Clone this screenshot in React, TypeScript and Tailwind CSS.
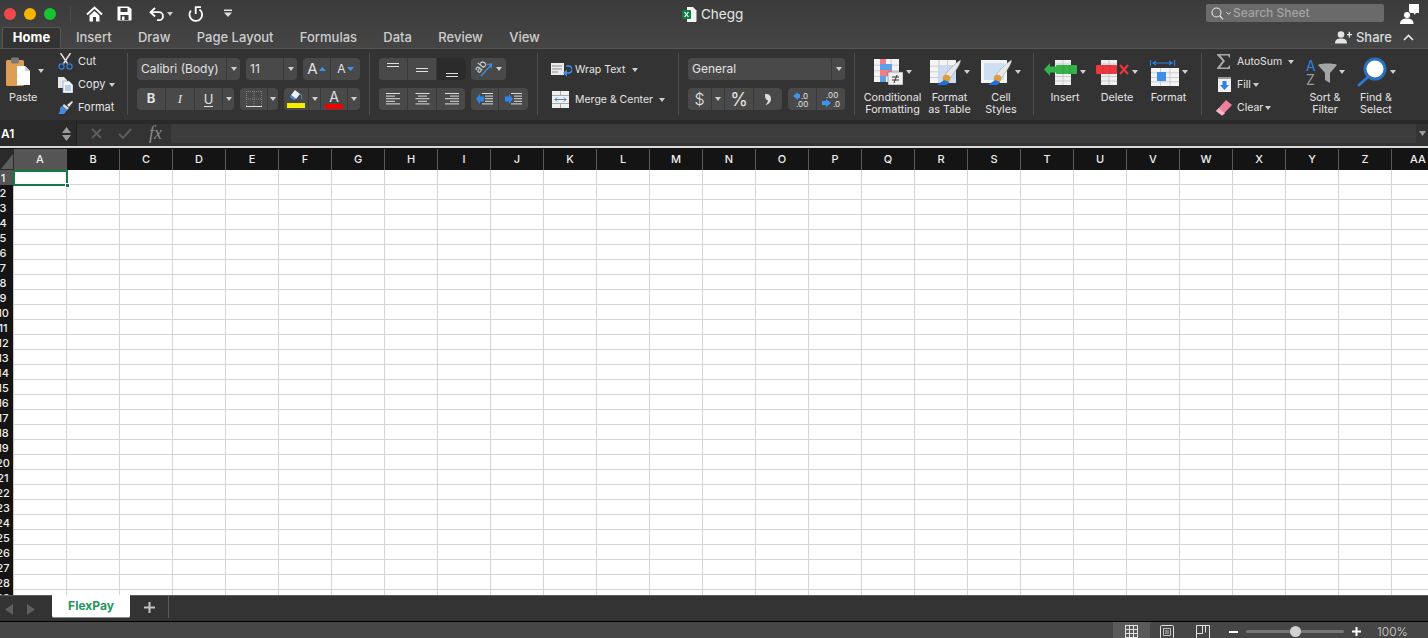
import type { ReactNode } from "react";

const COLUMNS = "A B C D E F G H I J K L M N O P Q R S T U V W X Y Z AA AB".split(" ");
const ROWS = Array.from({ length: 29 }, (_, i) => i + 1);
const TABS = ["Insert", "Draw", "Page Layout", "Formulas", "Data", "Review", "View"];

function Caret({ className = "" }: { className?: string }) {
  return (
    <svg width="6" height="4" viewBox="0 0 6 4" className={`shrink-0 ${className}`}>
      <path d="M0 0h6L3 4z" fill="#cfcfcf" />
    </svg>
  );
}

function Box({ className = "", children }: { className?: string; children: ReactNode }) {
  return (
    <div className={`flex h-[22px] items-stretch overflow-hidden rounded-[4px] bg-[#494949] text-[#e2e2e2] ${className}`}>
      {children}
    </div>
  );
}

function Cell({ className = "", children, last }: { className?: string; children?: ReactNode; last?: boolean }) {
  return (
    <div className={`flex items-center justify-center ${last ? "" : "border-r border-[#3a3a3a]"} ${className}`}>
      {children}
    </div>
  );
}

function Line({ w, y, c = "#e0e0e0" }: { w: number; y: number; c?: string }) {
  return <rect x={(14 - w) / 2} y={y} width={w} height="1" fill={c} />;
}

function AlignV({ rows }: { rows: number[] }) {
  return (
    <svg width="14" height="18" viewBox="0 0 14 18">
      {rows.map((y) => (
        <Line key={y} w={12} y={y} />
      ))}
    </svg>
  );
}

function AlignH({ mode }: { mode: "l" | "c" | "r" }) {
  const widths = [14, 9, 14, 9, 14];
  return (
    <svg width="15" height="12" viewBox="0 0 15 12">
      {widths.map((w, i) => (
        <rect key={i} x={mode === "l" ? 0 : mode === "c" ? (15 - w) / 2 : 15 - w} y={i * 2.6} width={w} height="1" fill="#dedede" />
      ))}
    </svg>
  );
}

function Indent({ flip }: { flip?: boolean }) {
  return (
    <svg width="18" height="12" viewBox="0 0 18 12">
      <path d={flip ? "M0 3.5h4V1l4 5-4 5V8.500H0z" : "M8 3.500H4V1L0 6l4 5V8.500h4z"} fill="#2e86e8" />
      {[0, 2.600, 5.200, 7.800, 10.400].map((y) => (
        <rect key={y} x={y > 2 && y < 9 ? 9 : 6} y={y} width={y > 2 && y < 9 ? 8 : 11} height="1" fill="#dedede" />
      ))}
    </svg>
  );
}

function TinyTable({ x, y, w, h, fill = "#f4f4f4", line = "#bdbdbd" }: { x: number; y: number; w: number; h: number; fill?: string; line?: string }) {
  return (
    <g>
      <rect x={x} y={y} width={w} height={h} fill={fill} />
      {[1, 2].map((i) => (
        <rect key={i} x={x + (w * i) / 3} y={y} width="0.7" height={h} fill={line} />
      ))}
      {[1, 2, 3].map((i) => (
        <rect key={i} x={x} y={y + (h * i) / 4} width={w} height="0.7" fill={line} />
      ))}
    </g>
  );
}

function Brush() {
  return (
    <g>
      <path d="M30.500 1C31 4 26 12 20 19L15 16C20 9 27 3 30.500 1z" fill="#e8e8e8" stroke="#8f8f8f" strokeWidth="0.500" />
      <circle cx="16.500" cy="19.500" r="3.800" fill="#e09b3a" />
      <path d="M14 21c-2 2-5 3-7 5h9c2-1 3-2 3-3z" fill="#1f6fdc" />
    </g>
  );
}

function LargeButton({ icon, caret = true, lines, className }: { icon: ReactNode; caret?: boolean; lines: string[]; className: string }) {
  return (
    <div className={`-mt-[3px] flex flex-col items-center ${className}`}>
      <div className="flex h-[34px] shrink-0 items-center justify-center gap-[3px]">
        {icon}
        {caret && <Caret />}
      </div>
      <div className="mt-[3px] shrink-0 text-center text-[10.800px] leading-[12px] text-[#e4e4e4]">
        {lines.map((l) => (
          <div key={l} className="whitespace-nowrap">{l}</div>
        ))}
      </div>
    </div>
  );
}

function Group({ className = "", children }: { className?: string; children: ReactNode }) {
  return <div className={`relative flex h-[62px] shrink-0 border-r border-[#4e4e4e] pt-[5px] ${className}`}>{children}</div>;
}

function SmallAction({ icon, label, caretClass = "ml-[2px]" }: { icon: ReactNode; label: string; caretClass?: string }) {
  return (
    <div className="flex h-[23px] items-center text-[10.500px] text-[#e4e4e4]">
      <div className="flex w-[20px] justify-center">{icon}</div>
      <span className="ml-[3px] whitespace-nowrap">{label}</span>
      <Caret className={caretClass} />
    </div>
  );
}

function TitleBar() {
  return (
    <div className="relative flex h-[27px] items-center">
      <div className="ml-[4px] flex gap-[8px]">
        <span className="size-[12px] rounded-full bg-[#f1484b]" />
        <span className="size-[12px] rounded-full bg-[#f5b400]" />
        <span className="size-[12px] rounded-full bg-[#17c431]" />
      </div>
      <div className="ml-[14px] h-[16px] w-px bg-[#4a4a4a]" />
      <svg width="17" height="16" viewBox="0 0 17 16" className="ml-[15px]">
        <path d="M1 8.500 8.500 1.500 16 8.500" fill="none" stroke="#fff" strokeWidth="2" />
        <path d="M3.500 9.500 8.500 5l5 4.500v6H10V11H7v4.500H3.500z" fill="#fff" />
      </svg>
      <svg width="15" height="15" viewBox="0 0 15 15" className="ml-[14px]">
        <path d="M1 .5h10.500L14.500 3v11.500H.5V.5z" fill="#fff" />
        <rect x="3.500" y="2" width="7" height="4" fill="#3d3d3d" />
        <rect x="3.500" y="9" width="8" height="5" fill="#3d3d3d" />
        <rect x="5" y="10.500" width="2.500" height="3.500" fill="#fff" />
      </svg>
      <svg width="16" height="14" viewBox="0 0 16 14" fill="none" stroke="#fff" strokeWidth="1.800" className="ml-[17px]">
        <path d="M6 1 1.500 5.200 6 9.500M2 5.200h8a4 4 0 0 1 0 8H8" />
      </svg>
      <Caret className="ml-[2px]" />
      <svg width="16" height="16" viewBox="0 0 16 16" fill="none" stroke="#fff" strokeWidth="1.800" className="ml-[14px]">
        <path d="M4 4.500A6.300 6.300 0 1 0 12.500 3.500" />
        <path d="M8.700 8V1.200H14" />
      </svg>
      <svg width="8" height="9" viewBox="0 0 8 9" className="ml-[21px]">
        <rect width="8" height="1.500" y="0.500" fill="#e0e0e0" />
        <path d="M0 3.500h8L4 8z" fill="#e0e0e0" />
      </svg>

      {/* document title sits over the centre of the bar */}
      <div className="absolute left-[682px] top-[4px] flex items-center gap-[4px]">
        <svg width="15" height="15" viewBox="0 0 15 15">
          <path d="M5 0h6l3.500 3.500V14a1 1 0 0 1-1 1H5z" fill="#f4f4f4" />
          <rect y="3" width="9" height="9" rx="1" fill="#107c41" />
          <path d="m2 5 1.300 0 1.200 1.800L5.700 5H7L5.200 7.500 7 10H5.700L4.500 8.200 3.300 10H2l1.800-2.500z" fill="#fff" />
        </svg>
        <span className="text-[13.500px] text-[#e8e8e8]">Chegg</span>
      </div>

      <div className="absolute left-[1206px] top-[4px] flex h-[18px] w-[178px] items-center rounded-[2px] bg-[#6a6a6a] pl-[5px]">
        <svg width="16" height="13" viewBox="0 0 16 13" fill="none" stroke="#e6e6e6">
          <circle cx="5.500" cy="5.500" r="4.500" strokeWidth="1.100" />
          <path d="m9 9 3 3.300" strokeWidth="1.200" />
        </svg>
        <svg width="5" height="3" viewBox="0 0 5 3" fill="none" stroke="#e6e6e6" className="ml-[-1px]">
          <path d="m.5.300 2 2 2-2" />
        </svg>
        <span className="ml-[2px] text-[12px] font-medium text-[#a3a3a3]">Search Sheet</span>
      </div>

      <svg width="19" height="21" viewBox="0 0 19 21" className="absolute left-[1400px] top-[4px]">
        <path d="M9 0h10v9h-3l-2 2V9H9z" fill="#fff" />
        <circle cx="7" cy="11" r="3.600" fill="#fff" stroke="#3f3f3f" />
        <path d="M0 20c0-4 3-5.500 7-5.500s6.500 1.500 6.500 5.500z" fill="#fff" />
      </svg>
    </div>
  );
}

function TabRow() {
  return (
    <div className="flex h-[21px] items-end">
      <div className="ml-[2px] flex h-[21px] w-[59px] items-center justify-center rounded-t-[3px] border-x border-t border-[#565656] bg-[#333333] text-[13px] font-bold text-white">
        Home
      </div>
      <div className="ml-[15px] flex h-[21px] items-center gap-[26.300px] text-[13px] font-medium text-[#cdcdcd]">
        {TABS.map((t) => (
          <span key={t} className="whitespace-nowrap">{t}</span>
        ))}
      </div>
      <div className="ml-auto flex h-[21px] items-center">
        <svg width="17" height="13" viewBox="0 0 17 13">
          <circle cx="6" cy="3.500" r="3.300" fill="#e4e4e4" />
          <path d="M0 12.500c0-4 2.500-5 6-5s6 1 6 5z" fill="#e4e4e4" />
          <path d="M12 3h1.700V.8h1.300V3h2v1.300h-2v2.200h-1.300V4.300H12z" fill="#e4e4e4" />
        </svg>
        <span className="ml-[4px] text-[13px] font-medium text-[#dcdcdc]">Share</span>
        <svg width="11" height="7" viewBox="0 0 11 7" fill="none" stroke="#e4e4e4" strokeWidth="1.700" className="ml-[11px] mr-[14px]">
          <path d="m1 6 4.500-4.500L10 6" />
        </svg>
      </div>
    </div>
  );
}

function Clipboard() {
  return (
    <Group className="w-[128px]">
      <div className="-mt-[3px] flex w-[48px] flex-col pl-[6px]">
        <div className="flex h-[34px] shrink-0 items-center">
          <svg width="24" height="30" viewBox="0 0 24 30">
            <rect x="0" y="3" width="18" height="26" rx="1.500" fill="#dd9d54" />
            <rect x="5" y="0.500" width="8" height="6" rx="1.500" fill="#7a7a7a" />
            <path d="M11 9h8l5 5v14H11z" fill="#fff" />
            <path d="M19 9v5h5z" fill="#cfcfcf" />
          </svg>
          <Caret className="ml-[8px] mb-[3px]" />
        </div>
        <span className="ml-[3px] mt-[3px] text-[10.800px] leading-[12px] text-[#e4e4e4]">Paste</span>
      </div>
      <div className="-mt-[8px] ml-[10px] flex flex-col text-[11px] text-[#e4e4e4]">
        <div className="flex h-[23px] shrink-0 items-center">
          <svg width="15" height="17" viewBox="0 0 15 17" fill="none" className="mr-[5px]">
            <path d="M2.500 0 9.500 10.500M12.500 0 5.500 10.500" stroke="#e6e6e6" strokeWidth="1.400" />
            <circle cx="3.500" cy="13.500" r="2.600" stroke="#2e7fe0" strokeWidth="1.200" />
            <circle cx="11.500" cy="13.500" r="2.600" stroke="#2e7fe0" strokeWidth="1.200" />
          </svg>
          Cut
        </div>
        <div className="flex h-[23px] shrink-0 items-center">
          <svg width="15" height="16" viewBox="0 0 15 16" className="mr-[5px]">
            <path d="M0 0h6l3 3v8H0z" fill="#e8e8e8" />
            <path d="M5 4h6l4 4v8H5z" fill="#f4f4f4" stroke="#6f9ccc" strokeWidth="0.600" />
            <path d="M7 9h6M7 11h6M7 13h6" stroke="#5b94d6" strokeWidth="0.800" />
          </svg>
          Copy
          <Caret className="ml-[4px]" />
        </div>
        <div className="flex h-[23px] shrink-0 items-center">
          <svg width="15" height="13" viewBox="0 0 15 13" className="mr-[5px]">
            <path d="m15 1-1-1-5 4 2 2z" fill="#e8e8e8" />
            <path d="M6 3 11 7 9 9 4.500 5z" fill="#d9d9d9" />
            <path d="M4 5 9 9.500 6 13H0c2-1 2-4 2-6z" fill="#3f8ce6" />
          </svg>
          Format
        </div>
      </div>
    </Group>
  );
}

function FontGroup() {
  return (
    <Group className="w-[242px] flex-col gap-[8px] pl-[9px]">
      <div className="flex gap-[6px]">
        <Box className="w-[103px] text-[12px]">
          <Cell className="w-[90px] justify-start! pl-[4px]">Calibri (Body)</Cell>
          <Cell last className="flex-1"><Caret /></Cell>
        </Box>
        <Box className="w-[51px] text-[12px]">
          <Cell className="w-[38px] justify-start! pl-[4px]">11</Cell>
          <Cell last className="flex-1"><Caret /></Cell>
        </Box>
        <Box className="w-[57px]">
          <Cell className="w-[28px] gap-[1px] text-[15px]">
            A<svg width="7" height="4" viewBox="0 0 7 4"><path d="M0 4h7L3.500 0z" fill="#3d93ee" /></svg>
          </Cell>
          <Cell last className="flex-1 gap-[1px] text-[12px]">
            A<svg width="7" height="4" viewBox="0 0 7 4"><path d="M0 0h7L3.500 4z" fill="#3d93ee" /></svg>
          </Cell>
        </Box>
      </div>
      <div className="flex gap-[6px]">
        <Box className="w-[97px] text-[13px]">
          <Cell className="w-[29px] font-bold">B</Cell>
          <Cell className="w-[29px] italic font-['Liberation_Serif',serif]">I</Cell>
          <Cell className="w-[28px]"><span className="border-b border-[#e2e2e2] leading-[14px]">U</span></Cell>
          <Cell last className="flex-1"><Caret /></Cell>
        </Box>
        <Box className="w-[38px]">
          <Cell className="w-[28px]">
            <svg width="16" height="16" viewBox="0 0 16 16" fill="none">
              <path d="M.5 0v15M8 0v15M15.500 0v15M0 .5h16M0 8h16" stroke="#8a8a8a" strokeWidth="0.800" strokeDasharray="1 1" />
              <path d="M0 15.500h16" stroke="#dcdcdc" />
            </svg>
          </Cell>
          <Cell last className="flex-1"><Caret /></Cell>
        </Box>
        <Box className="w-[76px]">
          <Cell className="w-[25px]">
            <svg width="18" height="18" viewBox="0 0 18 18">
              <path d="m8 0 5 4-4 5-5-4z" fill="#f0f0f0" />
              <path d="m4 5 5 4-2 1-4-3z" fill="#3d93ee" />
              <path d="M13 4c2 1 2 3 1.500 5" stroke="#3d93ee" fill="none" />
              <rect y="13" width="18" height="5" fill="#f5ee00" />
            </svg>
          </Cell>
          <Cell className="w-[12px]"><Caret /></Cell>
          <Cell className="w-[27px]">
            <div className="flex flex-col items-center leading-[14px] text-[14px]">
              A
              <div className="h-[5px] w-[18px] bg-[#f00000]" />
            </div>
          </Cell>
          <Cell last className="flex-1"><Caret /></Cell>
        </Box>
      </div>
    </Group>
  );
}

function AlignGroup() {
  return (
    <Group className="w-[168px] flex-col gap-[8px] pl-[9px]">
      <div className="flex gap-[5px]">
        <Box className="w-[87px]">
          <Cell className="w-[29px]"><AlignV rows={[3, 6]} /></Cell>
          <Cell className="w-[29px]"><AlignV rows={[8, 11]} /></Cell>
          <Cell last className="flex-1 bg-[#2b2b2b]"><AlignV rows={[13, 16]} /></Cell>
        </Box>
        <Box className="w-[35px]">
          <Cell last className="flex-1 gap-[3px]">
            <svg width="18" height="18" viewBox="0 0 18 18" overflow="visible">
              <text x="0" y="11" fontSize="11" fill="#dedede" transform="rotate(-50 5 8)">ab</text>
              <path d="M6 16 16 5M12 4.500 16.500 4 16 8.500" stroke="#3d93ee" strokeWidth="1.200" fill="none" />
            </svg>
            <Caret />
          </Cell>
        </Box>
      </div>
      <div className="flex gap-[6px]">
        <Box className="w-[86px]">
          <Cell className="w-[29px]"><AlignH mode="l" /></Cell>
          <Cell className="w-[29px]"><AlignH mode="c" /></Cell>
          <Cell last className="flex-1"><AlignH mode="r" /></Cell>
        </Box>
        <Box className="w-[57px]">
          <Cell className="w-[28px]"><Indent /></Cell>
          <Cell last className="flex-1"><Indent flip /></Cell>
        </Box>
      </div>
    </Group>
  );
}

function WrapGroup() {
  return (
    <Group className="w-[141px] flex-col gap-[7px] pl-[13px] text-[10.500px] text-[#e4e4e4]">
      <div className="mt-[1px] flex h-[22px] shrink-0 items-center">
        <svg width="21" height="14" viewBox="0 0 21 14" className="mr-[3px]">
          <rect width="13" height="12" fill="#ececec" />
          <path d="M1 3h10M1 6h10M1 9h6" stroke="#8a8a8a" />
          <path d="M15 3h2.500a3.500 3.500 0 0 1 0 7H16" fill="none" stroke="#3d93ee" strokeWidth="1.500" />
          <path d="m16 6.500-4 3.500 4 3.500z" fill="#3d93ee" />
        </svg>
        Wrap Text
        <Caret className="ml-[7px]" />
      </div>
      <div className="flex h-[23px] shrink-0 items-center">
        <svg width="21" height="17" viewBox="0 0 21 17" className="mr-[3px]">
          <rect x="1" width="17" height="17" fill="#f0f0f0" />
          <path d="M1 4.500h17M1 12.500h17M9.500 0v4M9.500 13v4" stroke="#8a8a8a" strokeWidth="0.700" />
          <path d="M4 8.500h11M6 6.500l-2 2 2 2M13 6.500l2 2-2 2" fill="none" stroke="#3d7fd0" />
        </svg>
        Merge &amp; Center
        <Caret className="ml-[6px]" />
      </div>
    </Group>
  );
}

function NumberGroup() {
  return (
    <Group className="w-[176px] flex-col gap-[8px] pl-[9px]">
      <Box className="w-[157px] text-[12px]">
        <Cell className="w-[144px] justify-start! pl-[4px]">General</Cell>
        <Cell last className="flex-1"><Caret /></Cell>
      </Box>
      <div className="flex gap-[6px]">
        <Box className="w-[94px]">
          <Cell className="w-[24px] text-[16px] font-light">$</Cell>
          <Cell className="w-[13px]"><Caret /></Cell>
          <Cell className="w-[29px] text-[18px]">%</Cell>
          <Cell last className="flex-1">
            <svg width="6" height="11" viewBox="0 0 6 11">
              <path d="M0 .3c3-.8 6 1 6 4.700 0 3-2.500 5.500-5.500 6C2.500 9 3 7.500 2.700 6 1 6.300 0 4.500 0 .3z" fill="#dedede" />
            </svg>
          </Cell>
        </Box>
        <Box className="w-[57px]">
          <Cell className="w-[29px]">
            <svg width="20" height="17" viewBox="0 0 20 17">
              <path d="M6 1 1 5l5 4V7h2V3H6z" fill="#3d93ee" />
              <text x="9" y="8" fontSize="8" fill="#e4e4e4">.0</text>
              <text x="4" y="16" fontSize="8" fill="#e4e4e4">.00</text>
            </svg>
          </Cell>
          <Cell last className="flex-1">
            <svg width="20" height="17" viewBox="0 0 20 17">
              <text x="5" y="7" fontSize="8" fill="#e4e4e4">.00</text>
              <text x="12" y="16" fontSize="8" fill="#e4e4e4">.0</text>
              <path d="M5 8l5 4-5 4v-2H1v-4h4z" fill="#3d93ee" />
            </svg>
          </Cell>
        </Box>
      </div>
    </Group>
  );
}

function StylesGroup() {
  return (
    <Group className="w-[179px] pl-[9px]">
      <LargeButton
        className="w-[57px]"
        lines={["Conditional", "Formatting"]}
        icon={
          <svg width="29" height="26" viewBox="0 0 29 26">
            <TinyTable x={0} y={0} w={25} h={23} />
            <rect x="6" y="0" width="6" height="5" fill="#ee7f86" />
            <rect x="6" y="5" width="12" height="6" fill="#5f9fe8" />
            <rect x="6" y="11" width="12" height="6" fill="#ee7f86" />
            <rect x="6" y="17" width="6" height="6" fill="#5f9fe8" />
            <rect x="14" y="13" width="15" height="13" fill="#efefef" stroke="#555" strokeWidth="0.500" />
            <path d="M18 18h7M18 21h7M23 16l-3 8" stroke="#333" fill="none" />
          </svg>
        }
      />
      <LargeButton
        className="w-[57px]"
        lines={["Format", "as Table"]}
        icon={
          <svg width="31" height="27" viewBox="0 0 31 27">
            <TinyTable x={0} y={1} w={26} h={23} />
            <rect x="8" y="6" width="18" height="18" fill="#c3d6ef" opacity="0.800" />
            <Brush />
          </svg>
        }
      />
      <LargeButton
        className="w-[46px]"
        lines={["Cell", "Styles"]}
        icon={
          <svg width="31" height="27" viewBox="0 0 31 27">
            <rect x="0" y="1" width="26" height="23" fill="#f4f4f4" />
            <rect x="3" y="4" width="20" height="17" fill="#cfdff3" />
            <Brush />
          </svg>
        }
      />
    </Group>
  );
}

function CellsGroup() {
  return (
    <Group className="w-[168px] pl-[5px]">
      <LargeButton
        className="w-[52px]"
        lines={["Insert"]}
        icon={
          <svg width="33" height="25" viewBox="0 0 33 25">
            <rect x="11" y="0" width="16" height="25" fill="#f0f0f0" />
            <path d="M19 0v25M11 16.500h16M11 21h16M11 4h16" stroke="#bbb" strokeWidth="0.700" />
            <rect x="12" y="5" width="21" height="9" rx="1" fill="#35b34a" />
            <path d="M19 5v9M26 5v9" stroke="#2a8f3b" strokeWidth="0.600" />
            <path d="M12 6.500H6V3L0 9.500 6 16v-3.500h6z" fill="#35b34a" />
          </svg>
        }
      />
      <LargeButton
        className="w-[52px]"
        lines={["Delete"]}
        icon={
          <svg width="33" height="25" viewBox="0 0 33 25">
            <rect x="5" y="0" width="16" height="25" fill="#f0f0f0" />
            <path d="M13 0v25M5 16.500h16M5 21h16M5 4h16" stroke="#bbb" strokeWidth="0.700" />
            <rect x="0" y="5" width="21" height="9" rx="1" fill="#ea3a3f" />
            <path d="M7 5v9M14 5v9" stroke="#bd2b2f" strokeWidth="0.600" />
            <path d="m24 5 8 9M32 5l-8 9" stroke="#e8373c" strokeWidth="2.200" />
          </svg>
        }
      />
      <LargeButton
        className="w-[51px]"
        lines={["Format"]}
        icon={
          <svg width="29" height="27" viewBox="0 0 29 27">
            <path d="M.5 1v6M24.500 1v6M3 4h19M6 2 3 4l3 2M19 2l3 2-3 2" stroke="#2f83e0" strokeWidth="1.200" fill="none" />
            <TinyTable x={1} y={9} w={28} h={18} />
            <rect x="7" y="13" width="9" height="9" fill="#3d8ee8" />
          </svg>
        }
      />
    </Group>
  );
}

function EditGroup() {
  return (
    <div className="flex h-[62px] shrink-0 pl-[12px] pt-[5px]">
      <div className="-mt-[8px] w-[86px]">
        <SmallAction
          label="AutoSum"
          caretClass="ml-[6px]"
          icon={
            <svg width="14" height="15" viewBox="0 0 14 15">
              <path d="M0 0h13v3.500h-1L11 1.500H3.500L8 7l-5 6.500h8l1-2h1V15H0v-1l5.500-7L0 1z" fill="#aaa" />
            </svg>
          }
        />
        <SmallAction
          label="Fill"
          icon={
            <svg width="13" height="15" viewBox="0 0 13 15">
              <rect width="13" height="15" fill="#f0f0f0" />
              <rect width="13" height="2" fill="#999" />
              <path d="M4.500 4h4v4H11l-4.500 5L2 8h2.500z" fill="#2e80e4" />
            </svg>
          }
        />
        <SmallAction
          label="Clear"
          icon={
            <svg width="16" height="16" viewBox="0 0 16 16">
              <path d="M10 0 16 5 6 15.500 0 11z" fill="#ef7f9c" />
              <path d="M3 8 9 13.500 6 15.500 0 11z" fill="#f7b6c6" />
            </svg>
          }
        />
      </div>
      <LargeButton
        className="w-[50px]"
        lines={["Sort &", "Filter"]}
        icon={
          <svg width="33" height="27" viewBox="0 0 33 27" overflow="visible" className="-mr-[3px]">
            <text x="0" y="12" fontSize="14" fill="#2f83e0">A</text>
            <text x="0" y="26" fontSize="14" fill="#9a9a9a">Z</text>
            <path d="M12 6c2-2 17-2 19 0l-7 8v10l-5-3v-7z" fill="#a5a5a5" />
          </svg>
        }
      />
      <LargeButton
        className="w-[52px]"
        lines={["Find &", "Select"]}
        icon={
          <svg width="30" height="30" viewBox="0 0 30 30">
            <circle cx="18" cy="12" r="10" fill="#fff" stroke="#2a6fc0" strokeWidth="3" />
            <path d="m11 20-9 8" stroke="#2f78cf" strokeWidth="3" strokeLinecap="round" />
          </svg>
        }
      />
    </div>
  );
}

function Ribbon() {
  return (
    <div className="flex h-[72px] border-t border-[#555555] bg-[#333333] pt-[4px]">
      <Clipboard />
      <FontGroup />
      <AlignGroup />
      <WrapGroup />
      <NumberGroup />
      <StylesGroup />
      <CellsGroup />
      <EditGroup />
    </div>
  );
}

function FormulaBar() {
  return (
    <div className="flex h-[26px] bg-[#2a2a2a]">
      <div className="flex w-[77px] items-center justify-between border-r border-[#222] pb-[1px] pl-[1px] pr-[5px]">
        <span className="mt-[3px] text-[12px] font-semibold text-white">A1</span>
        <div className="mt-[3px] flex flex-col gap-[2px]">
          <svg width="9" height="6" viewBox="0 0 9 6"><path d="M0 6h9L4.500 0z" fill="#9a9a9a" /></svg>
          <svg width="9" height="6" viewBox="0 0 9 6"><path d="M0 0h9L4.500 6z" fill="#9a9a9a" /></svg>
        </div>
      </div>
      <div className="flex flex-1 items-end bg-[#333333]">
        <div className="flex h-[26px] w-full items-center bg-[#2a2a2a]">
          <div className="mt-[4px] flex h-[22px] w-full items-start bg-[#333333]">
            <div className="flex h-[19px] w-[94px] items-center">
              <svg width="11" height="11" viewBox="0 0 11 11" className="ml-[14px]" stroke="#5c5c5c" strokeWidth="2">
                <path d="m1 1 9 9M10 1l-9 9" />
              </svg>
              <svg width="14" height="11" viewBox="0 0 14 11" className="ml-[16px]" fill="none" stroke="#5c5c5c" strokeWidth="2">
                <path d="m1 6 4 4 8-9" />
              </svg>
              <span className="ml-[17px] font-['Liberation_Serif',serif] text-[18px] italic text-[#8a8a8a]">fx</span>
            </div>
            <div className="h-[19px] flex-1 rounded-l-[2px] bg-[#3c3c3c]" />
            <div className="flex h-[19px] w-[12px] items-center justify-center">
              <svg width="7" height="5" viewBox="0 0 7 5"><path d="M0 0h7L3.500 5z" fill="#9a9a9a" /></svg>
            </div>
          </div>
        </div>
      </div>
    </div>
  );
}

function Sheet() {
  return (
    <div className="relative flex-1 overflow-hidden bg-white">
      <div className="flex h-[21px] w-max bg-[#141414]">
        <div className="relative w-[14px] bg-[#2a2a2a]">
          <svg width="13" height="21" viewBox="0 0 13 21" className="block">
            <path d="M13 5v15H1z" fill="#5d5d5d" />
          </svg>
        </div>
        {COLUMNS.map((c, i) => (
          <div
            key={c}
            className={`flex w-[53px] items-center justify-center border-r border-[#5a5a5a] text-[11px] font-medium text-[#eeeeee] ${i === 0 ? "bg-[#555555]" : ""}`}
          >
            {c}
          </div>
        ))}
      </div>
      {ROWS.map((r) => (
        <div key={r} className="flex h-[15px] w-max">
          <div className={`flex h-[15px] w-[14px] overflow-hidden border-r border-[#c8c8c8] text-[11px] font-medium leading-[16px] text-[#eeeeee] ${r === 1 ? "bg-[#555555]" : "bg-[#141414]"}`}>
            <div className="flex w-[6px] justify-center">
              <span className="whitespace-nowrap">{r}</span>
            </div>
          </div>
          {COLUMNS.map((c) => (
            <div key={c} className="h-[15px] w-[53px] border-r border-b border-[#d4d4d4]" />
          ))}
        </div>
      ))}
      {/* active cell selection */}
      <div className="absolute left-[13px] top-[21px] h-[16px] w-[55px] border-2 border-[#107c41]" />
      <div className="absolute left-[65px] top-[34px] size-[5px] border border-white bg-[#107c41]" />
    </div>
  );
}

function SheetTabs() {
  return (
    <div className="flex h-[27px] border-t border-[#5c5c5c] border-b border-b-black bg-[#333333]">
      <div className="flex w-[52px] items-start gap-[14px] pl-[5px] pt-[8px]">
        <svg width="8" height="11" viewBox="0 0 8 11"><path d="M8 0v11L0 5.500z" fill="#5f5f5f" /></svg>
        <svg width="8" height="11" viewBox="0 0 8 11"><path d="M0 0v11l8-5.500z" fill="#5f5f5f" /></svg>
      </div>
      <div className="-mt-px flex h-[23px] w-[78px] items-center justify-center rounded-b-[2px] border-b border-[#8a8a8a] bg-white text-[12px] font-bold text-[#1e9a5c]">
        FlexPay
      </div>
      <div className="flex h-[22px] w-[39px] items-center justify-center border-r border-[#5c5c5c]">
        <svg width="11" height="11" viewBox="0 0 11 11"><path d="M4.500 0h2v4.500H11v2H6.500V11h-2V6.500H0v-2h4.500z" fill="#c4c4c4" /></svg>
      </div>
    </div>
  );
}

function StatusBar() {
  return (
    <div className="flex h-[16px] items-center bg-[#464646] text-[#d6d6d6]">
      <div className="ml-[1113px] flex h-[16px] w-[37px] items-center justify-center bg-[#5a5a5a]">
        <svg width="13" height="13" viewBox="0 0 13 13" fill="none" stroke="#e2e2e2" className="mt-[3px]">
          <path d="M.5 0v13M4.500 0v13M8.500 0v13M12.500 0v13M0 .5h13M0 4.500h13M0 8.500h13M0 12.500h13" />
        </svg>
      </div>
      <svg width="14" height="14" viewBox="0 0 14 14" fill="none" stroke="#e2e2e2" className="ml-[10px] mt-[3px]">
        <rect x="0.500" y="0.500" width="13" height="13" rx="1" />
        <path d="M3.500 3.500h7v7h-7zM5 6h4M5 8h4" strokeWidth="0.800" />
      </svg>
      <svg width="14" height="14" viewBox="0 0 14 14" fill="none" stroke="#e2e2e2" className="ml-[22px] mt-[3px]">
        <path d="M.5 14V.5h13V14M.5 8.500h6V.5M9.500.5v7" />
      </svg>
      <div className="ml-[19px] mt-[3px] h-[2px] w-[9px] bg-white" />
      <div className="relative ml-[8px] mt-[3px] h-[3px] w-[98px] rounded-full bg-[#767676]">
        <div className="absolute left-[44px] top-[-4px] size-[11px] rounded-full bg-[#d2d2d2]" />
      </div>
      <svg width="9" height="9" viewBox="0 0 9 9" className="ml-[8px] mt-[3px]">
        <path d="M3.500 0h2v3.500H9v2H5.500V9h-2V5.500H0v-2h3.500z" fill="#fff" />
      </svg>
      <span className="ml-[16px] mt-[3px] text-[12px] font-light">100%</span>
    </div>
  );
}

export default function App() {
  return (
    <div className="flex h-[638px] w-[1428px] flex-col overflow-hidden bg-[#333333] font-['Inter','Noto_Sans',sans-serif]">
      <div className="h-[48px] bg-gradient-to-b from-[#3b3b3b] to-[#454545]">
        <TitleBar />
        <TabRow />
      </div>
      <Ribbon />
      <FormulaBar />
      <div className="h-[3px] border-t-2 border-[#d8d8d8] bg-[#141414]" />
      <Sheet />
      <SheetTabs />
      <StatusBar />
    </div>
  );
}
